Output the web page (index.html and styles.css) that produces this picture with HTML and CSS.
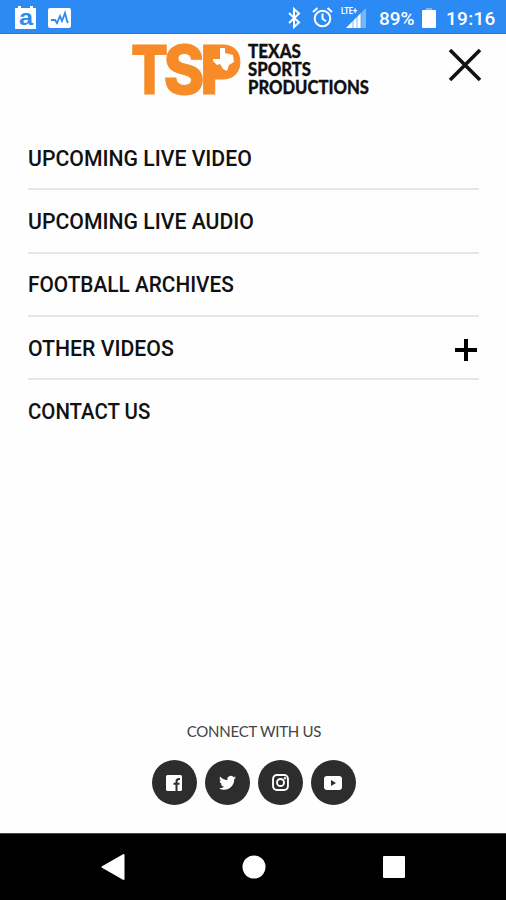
FILE: index.html
```html
<!DOCTYPE html>
<html lang="en">
<head>
    <meta charset="UTF-8">
    <meta name="viewport" content="width=device-width, initial-scale=1.0">
    <title>Texas Sports Productions</title>
    <link rel="stylesheet" href="styles.css">
</head>
<body>
    <div class="status-bar">
        <div class="status-left">
            <svg width="23" height="23" viewBox="0 0 23 23">
                <path d="M1 2h3V0h3v2h9V0h3v2h3v21H1z" fill="#fff"/>
                <text class="app-letter" x="5" y="19" textLength="14" lengthAdjust="spacingAndGlyphs">a</text>
            </svg>
            <svg width="23" height="20" viewBox="0 0 23 20">
                <rect width="23" height="20" rx="2" fill="#fff"/>
                <path d="M3 12h4l2 3 3-7 2 5 3-8 2 8 1 2" fill="none" stroke="#2b8af3" stroke-width="1.8"/>
            </svg>
        </div>
        <div class="status-right">
            <svg class="bluetooth" width="14" height="20" viewBox="0 0 14 20">
                <path d="M2 5l10 9.5L7 19V1l5 4.5L2 15" fill="none" stroke="#fff" stroke-width="2"/>
            </svg>
            <svg class="alarm" width="21" height="21" viewBox="0 0 21 21">
                <g fill="none" stroke="#fff" stroke-width="2">
                    <circle cx="10.5" cy="11.5" r="7.8"/>
                    <path d="M10.5 6.5v5.3l3.5 2.4M1 5l4.5-4M20 5l-4.5-4"/>
                </g>
            </svg>
            <svg class="signal" width="26" height="22" viewBox="0 0 26 22">
                <path d="M25 2v20H5z" fill="#78b5f9"/>
                <path d="M20 7v15H5z" fill="#fff"/>
                <path d="M12 14v8M16 10v12M20 6v16" stroke="#2b8af3" stroke-width=".6"/>
                <text class="lte" x="0" y="8" textLength="16" lengthAdjust="spacingAndGlyphs">LTE+</text>
            </svg>
            <span class="percent">89%</span>
            <svg class="battery" width="14" height="20" viewBox="0 0 14 20">
                <path d="M4 0h6v3H4z" fill="#78b5f9"/>
                <rect y="2" width="14" height="18" rx="1" fill="#fff"/>
            </svg>
            <span class="clock">19:16</span>
        </div>
    </div>

    <header class="header">
        <svg class="logo" width="240" height="60" viewBox="0 0 240 60">
            <g class="logo-mark">
                <text x="0" y="54" textLength="37" lengthAdjust="spacingAndGlyphs">T</text>
                <text x="32.5" y="54" textLength="41" lengthAdjust="spacingAndGlyphs">S</text>
                <text x="69" y="54" textLength="42" lengthAdjust="spacingAndGlyphs">P</text>
            </g>
            <rect x="76" y="9" width="26" height="27" rx="5" fill="#f68b28"/>
            <path d="M89 8h5v5l8 2 1 7-5 3-2 6-4-2-3-5-3 1-4-4v-2h7z" fill="#fff"/>
            <g class="logo-name">
                <text x="117" y="18" textLength="53" lengthAdjust="spacingAndGlyphs">TEXAS</text>
                <text x="117" y="35.5" textLength="63" lengthAdjust="spacingAndGlyphs">SPORTS</text>
                <text x="117" y="54" textLength="121" lengthAdjust="spacingAndGlyphs">PRODUCTIONS</text>
            </g>
        </svg>
        <button class="close-btn" aria-label="Close menu">
            <svg width="34" height="34" viewBox="0 0 34 34">
                <path d="M2 2l30 30M32 2L2 32" stroke="#111" stroke-width="3.6"/>
            </svg>
        </button>
    </header>

    <nav class="menu">
        <a class="menu-item" href="#"><span>UPCOMING LIVE VIDEO</span></a>
        <a class="menu-item" href="#"><span>UPCOMING LIVE AUDIO</span></a>
        <a class="menu-item archives" href="#"><span>FOOTBALL ARCHIVES</span></a>
        <a class="menu-item" href="#">
            <span>OTHER VIDEOS</span>
            <svg class="plus" width="22" height="22" viewBox="0 0 22 22">
                <path d="M11 0v22M0 11h22" stroke="#000" stroke-width="4"/>
            </svg>
        </a>
        <a class="menu-item contact" href="#"><span>CONTACT US</span></a>
    </nav>

    <footer class="footer">
        <p class="connect">CONNECT WITH US</p>
        <div class="social">
            <a class="social-btn" href="#" aria-label="Facebook">
                <svg width="16" height="16" viewBox="0 0 16 16">
                    <rect width="16" height="16" rx="1.5" fill="#fff"/>
                    <path d="M10.5 16V6.500q0-2.500 2.500-2.500h1M7.500 8.700h6" fill="none" stroke="#2d2d2d" stroke-width="2"/>
                </svg>
            </a>
            <a class="social-btn" href="#" aria-label="Twitter">
                <svg width="17" height="16" viewBox="1 2 22 20">
                    <path d="M23 5c-.8.4-1.7.6-2.6.7.9-.6 1.6-1.400 2-2.500-.9.500-1.800.900-2.900 1.100A4.500 4.500 0 0 0 11.800 8.400C8 8.200 4.700 6.400 2.500 3.700c-1.200 2-.6 4.700 1.400 6-.7 0-1.400-.2-2-.6 0 2.200 1.500 4.100 3.600 4.500-.7.200-1.400.2-2 .1.600 1.800 2.200 3.100 4.200 3.200A9 9 0 0 1 1 18.700C9.500 24 20.900 18.500 20.700 7.300 21.600 6.700 22.400 5.900 23 5z" fill="#fff"/>
                </svg>
            </a>
            <a class="social-btn" href="#" aria-label="Instagram">
                <svg width="17" height="17" viewBox="0 0 16 16">
                    <rect x="1" y="1" width="14" height="14" rx="3.5" fill="none" stroke="#fff" stroke-width="1.8"/>
                    <circle cx="8" cy="8" r="3.3" fill="none" stroke="#fff" stroke-width="1.8"/>
                    <circle cx="12.2" cy="3.9" r="1.1" fill="#fff"/>
                </svg>
            </a>
            <a class="social-btn" href="#" aria-label="YouTube">
                <svg width="18" height="14" viewBox="0 0 18 14">
                    <rect width="18" height="14" rx="3" fill="#fff"/>
                    <path d="M7 4v6l5-3z" fill="#2d2d2d"/>
                </svg>
            </a>
        </div>
    </footer>

    <div class="nav-bar">
        <svg width="24" height="28" viewBox="0 0 24 28">
            <path d="M1.500 14L22.500 2v24z" fill="#fff" stroke="#fff" stroke-width="2" stroke-linejoin="round"/>
        </svg>
        <svg width="24" height="24" viewBox="0 0 24 24">
            <circle cx="12" cy="12" r="11.5" fill="#fff"/>
        </svg>
        <svg width="22" height="22" viewBox="0 0 22 22">
            <rect width="22" height="22" rx="1" fill="#fff"/>
        </svg>
    </div>
</body>
</html>
```
FILE: styles.css
```css
* {
    box-sizing: border-box;
}
body {
    margin: 0;
    height: 900px;
    display: flex;
    flex-direction: column;
    background: #fefefe;
    font-family: Roboto, sans-serif;
    overflow: hidden;
}
svg {
    display: block;
    flex-shrink: 0;
    overflow: visible;
}
.status-bar {
    display: flex;
    justify-content: space-between;
    height: 34px;
    padding: 0 10px 0 14px;
    background: #2b8af3;
    border-bottom: 1px solid #1479ec;
    color: #fff;
}
.status-left, .status-right {
    display: flex;
    align-items: center;
}
.status-left {
    gap: 11px;
    padding-top: 2px;
}
.status-right {
    padding-top: 2px;
}
.app-letter {
    font: bold 22px "Liberation Sans", sans-serif;
    fill: #2b8af3;
}
.lte {
    font: bold 9px Roboto, sans-serif;
    fill: #fff;
}
.alarm {
    margin-left: 11px;
}
.signal {
    margin: 0 12px 2px 8px;
}
.percent, .clock {
    font-size: 19px;
    font-weight: 500;
    line-height: 34px;
    padding-top: 2px;
}
.percent {
    width: 37px;
}
.battery {
    margin: 0 10px 0 6px;
}
.clock {
    width: 50px;
    letter-spacing: 0.3px;
}
.header {
    display: flex;
    justify-content: space-between;
    height: 93px;
    padding: 6px 24px 0 131px;
}
.logo-mark {
    font: 800 67px Inter, sans-serif;
    fill: #f68b28;
    stroke: #f68b28;
    stroke-width: 1;
}
.logo-name {
    font: 900 18px Lato, sans-serif;
    fill: #111;
    stroke: #111;
    stroke-width: 0.3;
}
.close-btn {
    width: 34px;
    height: 34px;
    margin-top: 8px;
    padding: 0;
    border: none;
    background: none;
}
.menu {
    padding: 0 27px 0 28px;
}
.menu-item {
    display: flex;
    align-items: center;
    justify-content: space-between;
    height: 63.3px;
    border-bottom: 2px solid #e6e6e6;
    color: #111;
    font-size: 22.5px;
    font-weight: 500;
    text-decoration: none;
}
.menu-item span {
    transform: scaleX(0.943);
    transform-origin: left;
}
.menu-item.archives span {
    transform: scaleX(0.925);
}
.menu-item.contact span {
    transform: scaleX(0.907);
}
.menu-item:last-child {
    height: 61px;
    border-bottom: none;
}
.plus {
    margin: 5px 2px 0 0;
}
.footer {
    margin-top: auto;
    padding-bottom: 28px;
}
.connect {
    margin: 0 0 17px;
    padding-left: 2px;
    text-align: center;
    font: 15px/24px Lato, sans-serif;
    letter-spacing: -0.25px;
    color: #444;
}
.social {
    display: flex;
    justify-content: center;
    gap: 8px;
    padding-left: 1px;
}
.social-btn {
    display: flex;
    align-items: center;
    justify-content: center;
    width: 45px;
    height: 45px;
    border-radius: 50%;
    background: #2d2d2d;
}
.nav-bar {
    display: flex;
    align-items: center;
    justify-content: space-between;
    height: 67px;
    padding: 0 101px;
    border-top: 1px solid #444;
    background: #000;
}
```
